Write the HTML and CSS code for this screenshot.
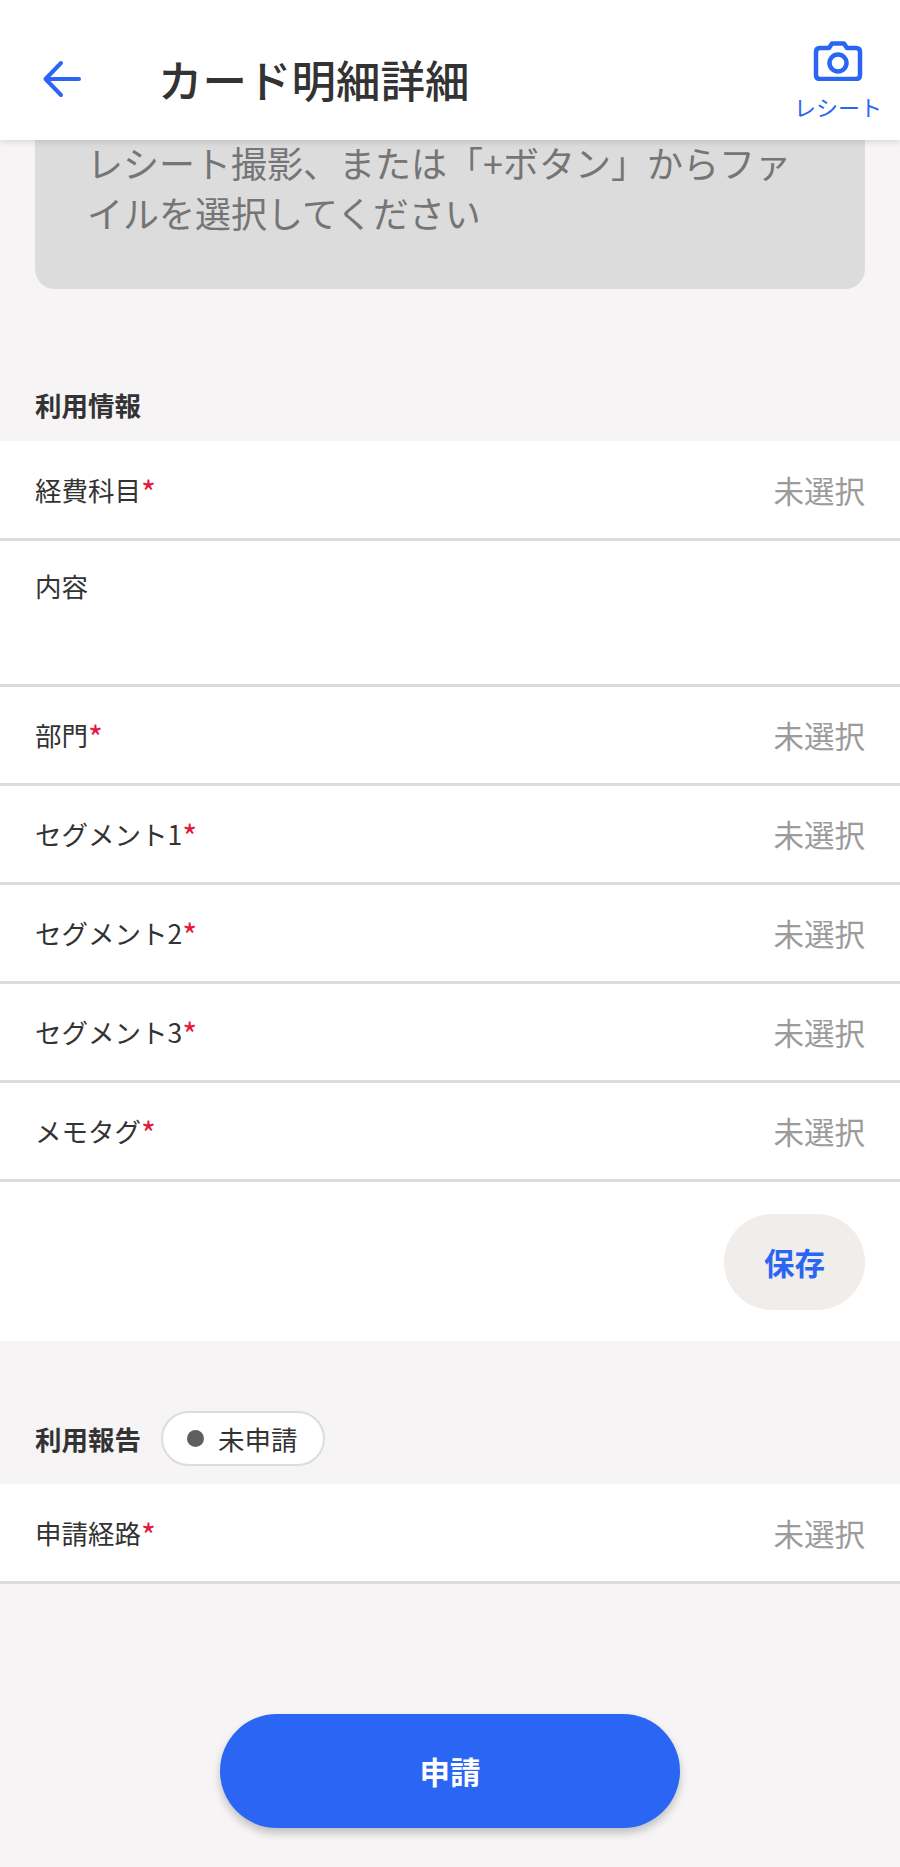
FILE: index.html
```html
<!DOCTYPE html>
<html lang="ja">
<head>
    <meta charset="UTF-8">
    <meta name="viewport" content="width=device-width, initial-scale=1.0">
    <title>カード明細詳細</title>
    <link rel="stylesheet" href="styles.css">
</head>
<body>
    <header class="app-header">
        <button class="back-button" aria-label="戻る">
            <svg width="40" height="38" viewBox="0 0 40 38" fill="none" stroke="#2a66f3" stroke-width="4" stroke-linecap="round" stroke-linejoin="round">
                <path d="M37 19H4M19 3 3.500 19 19 35"/>
            </svg>
        </button>
        <h1 class="app-title">カード明細詳細</h1>
        <button class="receipt-button">
            <svg width="50" height="42" viewBox="0 0 50 42" fill="none" stroke="#2a66f3" stroke-width="4.500" stroke-linejoin="round">
                <path d="M16 9 19 4.500H31L34 9H43Q47 9 47 13V36Q47 40 43 40H7Q3 40 3 36V13Q3 9 7 9Z"/>
                <circle cx="25" cy="24" r="8.500"/>
            </svg>
            <span class="receipt-label">レシート</span>
        </button>
    </header>

    <div class="drop-hint">レシート撮影、または「+ボタン」からファイルを選択してください</div>

    <h2 class="section-title section-usage">利用情報</h2>
    <section class="form-group">
        <div class="form-row"><span class="row-label">経費科目<em class="required">*</em></span><span class="row-value">未選択</span></div>
        <div class="form-row form-row-tall"><span class="row-label">内容</span></div>
        <div class="form-row"><span class="row-label">部門<em class="required">*</em></span><span class="row-value">未選択</span></div>
        <div class="form-row"><span class="row-label">セグメント1<em class="required">*</em></span><span class="row-value">未選択</span></div>
        <div class="form-row"><span class="row-label">セグメント2<em class="required">*</em></span><span class="row-value">未選択</span></div>
        <div class="form-row"><span class="row-label">セグメント3<em class="required">*</em></span><span class="row-value">未選択</span></div>
        <div class="form-row"><span class="row-label">メモタグ<em class="required">*</em></span><span class="row-value">未選択</span></div>
        <div class="save-row"><button class="save-button">保存</button></div>
    </section>

    <div class="report-head">
        <h2 class="section-title">利用報告</h2>
        <span class="status-chip"><i class="status-dot"></i>未申請</span>
    </div>
    <section class="form-group">
        <div class="form-row"><span class="row-label">申請経路<em class="required">*</em></span><span class="row-value">未選択</span></div>
    </section>

    <div class="submit-wrap"><button class="submit-button">申請</button></div>
</body>
</html>
```

FILE: styles.css
```css
* {
    box-sizing: border-box;
}
body {
    margin: 0;
    background-color: #f6f4f5;
    color: #333;
    font-family: "Noto Sans CJK JP", "Noto Sans", sans-serif;
}
button {
    font-family: inherit;
    border: none;
    background: none;
    padding: 0;
}

/* Header */
.app-header {
    position: relative;
    display: flex;
    align-items: center;
    height: 140px;
    padding-left: 42px;
    background-color: #fff;
    box-shadow: 0 2px 6px rgba(0, 0, 0, 0.12);
}
.back-button {
    display: flex;
    width: 116px;
    margin-top: 18px;
}
.app-title {
    margin: 18px 0 0;
    font-size: 44.500px;
    font-weight: 500;
    line-height: 60px;
}
.receipt-button {
    display: flex;
    flex-direction: column;
    align-items: center;
    margin-left: auto;
    margin-right: 18px;
    margin-top: 18px;
    color: #2a66f3;
}
.receipt-label {
    font-size: 22px;
    line-height: 28px;
    margin-top: 11px;
}

/* Grey hint card, scrolled partly under the header */
.drop-hint {
    height: 152px;
    margin: -3px 35px 0;
    padding: 0 54px 0 52px;
    border-radius: 0 0 20px 20px;
    background-color: #dcdcdc;
    color: #757575;
    font-size: 36px;
    line-height: 50px;
}

/* Sections */
.section-title {
    margin: 0;
    font-size: 26.500px;
    font-weight: 700;
    line-height: 36px;
}
.section-usage {
    margin: 98px 35px 18px;
}
.form-group {
    padding-top: 1px;
    background-color: #fff;
}
.form-row {
    display: flex;
    justify-content: space-between;
    align-items: center;
    height: 99px;
    padding: 0 35px;
    border-bottom: 3px solid #dcdcdc;
}
.form-row-tall {
    height: 146px;
    align-items: flex-start;
    padding-top: 26px;
}
.row-label {
    font-size: 26.500px;
    line-height: 38px;
}
.required {
    color: #e5173f;
    font-size: 32px;
    font-style: normal;
    line-height: 0;
    vertical-align: -4px;
}
.row-value {
    color: #9b9b9b;
    font-size: 30.500px;
    line-height: 40px;
}
.save-row {
    display: flex;
    justify-content: flex-end;
    height: 159px;
    padding: 32px 35px 0;
}
.save-button {
    width: 141px;
    height: 96px;
    border-radius: 48px;
    background-color: #f0edeb;
    color: #2a66f3;
    font-size: 30.500px;
    font-weight: 700;
}

/* Report heading with status chip */
.report-head {
    display: flex;
    align-items: center;
    gap: 20px;
    padding: 70px 35px 18px;
}
.status-chip {
    display: flex;
    align-items: center;
    height: 55px;
    padding: 0 25px 0 24px;
    border: 2px solid #dcdcdc;
    border-radius: 28px;
    background-color: #fff;
    font-size: 26.500px;
}
.status-dot {
    width: 17px;
    height: 17px;
    margin-right: 14px;
    border-radius: 50%;
    background-color: #5f5f5f;
}

/* Submit */
.submit-wrap {
    display: flex;
    justify-content: center;
    padding: 130px 0 39px;
}
.submit-button {
    width: 460px;
    height: 114px;
    border-radius: 57px;
    background-color: #2a66f3;
    color: #fff;
    font-size: 30.500px;
    font-weight: 700;
    box-shadow: 0 5px 8px rgba(0, 0, 0, 0.22);
}
```
